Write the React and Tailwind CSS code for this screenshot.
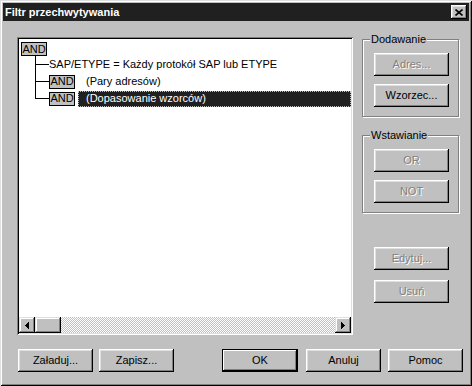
import React from 'react';
import clsx from 'clsx';

const Btn = ({ children, disabled, def, className }) => (
  <button
    className={clsx(
      'flex h-[23px] shrink-0 items-center justify-center bg-[#c0c0c0] text-[11px] leading-none',
      def
        ? 'w-[76px] border border-black shadow-[inset_-1px_-1px_#000,inset_1px_1px_#fff,inset_-2px_-2px_#808080]'
        : 'w-[75px] shadow-[inset_-1px_-1px_#000,inset_1px_1px_#fff,inset_-2px_-2px_#808080,inset_2px_2px_#dfdfdf]',
      disabled ? 'text-[#808080] [text-shadow:1px_1px_0_#fff]' : 'text-black',
      className
    )}
  >
    {children}
  </button>
);

// etched group frame, label sits on the top line
const Group = ({ label, children, className }) => (
  <div
    className={clsx(
      'w-[97px] border border-[#808080] pb-[9px] shadow-[inset_1px_1px_#fff,1px_1px_#fff]',
      className
    )}
  >
    <div className="-mt-[7px] ml-[7px] w-fit bg-[#c0c0c0] px-[1px] leading-[13px]">{label}</div>
    <div className="mt-[7px] flex flex-col gap-[8px] pl-[11px]">{children}</div>
  </div>
);

const AndBox = () => (
  <div className="flex h-[14px] w-[26px] items-center justify-center border border-black bg-[#c0c0c0] text-[11px] leading-none">
    AND
  </div>
);

const Row = ({ last, children }) => (
  <div className="flex h-[17px]">
    <div className="flex w-[14px] flex-col">
      <div className="h-[9px] border-b border-l border-black" />
      {!last && <div className="flex-1 border-l border-black" />}
    </div>
    <div className="flex flex-1 items-center">{children}</div>
  </div>
);

const ScrollBtn = ({ dir }) => (
  <div className="flex h-[16px] w-[16px] items-center justify-center bg-[#c0c0c0] shadow-[inset_-1px_-1px_#000,inset_1px_1px_#dfdfdf,inset_-2px_-2px_#808080,inset_2px_2px_#fff]">
    <svg width="4" height="7" viewBox="0 0 4 7" shapeRendering="crispEdges">
      {dir === 'left' ? (
        <path d="M4 0V7L0 3.5Z" fill="#000" />
      ) : (
        <path d="M0 0V7L4 3.5Z" fill="#000" />
      )}
    </svg>
  </div>
);

export default function App() {
  return (
    <div className="h-[386px] w-[472px] bg-[#c0c0c0] p-[3px] font-['Liberation_Sans',Arial,sans-serif] text-[11px] text-black shadow-[inset_1px_1px_#dfdfdf,inset_-1px_-1px_#000,inset_2px_2px_#fff,inset_-2px_-2px_#808080]">
      <div className="flex h-[18px] items-center justify-between bg-[#202020] px-[2px]">
        <span className="text-[11px] font-bold text-white">Filtr przechwytywania</span>
        <button className="flex h-[14px] w-[16px] items-center justify-center bg-[#c0c0c0] shadow-[inset_-1px_-1px_#000,inset_1px_1px_#fff,inset_-2px_-2px_#808080,inset_2px_2px_#dfdfdf]">
          <svg width="8" height="7" viewBox="0 0 8 7">
            <path d="M0.5 0.5L7.5 6.5M7.5 0.5L0.5 6.5" stroke="#000" strokeWidth="1.6" />
          </svg>
        </button>
      </div>

      <div className="flex pt-[16px] pl-[14px]">
        <div className="flex h-[298px] w-[336px] flex-col bg-white p-[2px] shadow-[inset_1px_1px_#808080,inset_-1px_-1px_#fff,inset_2px_2px_#000,inset_-2px_-2px_#dfdfdf]">
          <div className="flex-1 overflow-hidden pt-[3px] pl-[2px]">
            <div className="flex">
              <AndBox />
            </div>
            <div className="ml-[14px]">
              <Row>
                <span className="whitespace-nowrap">SAP/ETYPE = Każdy protokół SAP lub ETYPE</span>
              </Row>
              <Row>
                <AndBox />
                <span className="ml-[3px] pl-[8px] whitespace-nowrap">(Pary adresów)</span>
              </Row>
              <Row last>
                <AndBox />
                <span className="ml-[3px] flex h-[16px] flex-1 items-center border border-dotted border-[#c0c0c0] bg-[#202020] pl-[7px] whitespace-nowrap text-white">
                  (Dopasowanie wzorców)
                </span>
              </Row>
            </div>
          </div>
          <div className="flex h-[16px]">
            <ScrollBtn dir="left" />
            <div className="flex flex-1 bg-[repeating-conic-gradient(#c0c0c0_0_25%,#fff_0_50%)] bg-[length:2px_2px]">
              <div className="h-[16px] w-[26px] bg-[#c0c0c0] shadow-[inset_-1px_-1px_#000,inset_1px_1px_#dfdfdf,inset_-2px_-2px_#808080,inset_2px_2px_#fff]" />
            </div>
            <ScrollBtn dir="right" />
          </div>
        </div>

        <div className="mt-[2px] ml-[9px] flex w-[98px] flex-col">
          <Group label="Dodawanie">
            <Btn disabled>Adres...</Btn>
            <Btn>Wzorzec...</Btn>
          </Group>
          <Group label="Wstawianie" className="mt-[18px]">
            <Btn disabled>OR</Btn>
            <Btn disabled>NOT</Btn>
          </Group>
          <Btn disabled className="mt-[34px] ml-[12px]">Edytuj...</Btn>
          <Btn disabled className="mt-[10px] ml-[12px]">Usuń</Btn>
        </div>
      </div>

      <div className="mt-[14px] flex pl-[15px]">
        <Btn>Załaduj...</Btn>
        <Btn className="ml-[6px]">Zapisz...</Btn>
        <Btn def className="ml-[48px]">OK</Btn>
        <Btn className="ml-[8px]">Anuluj</Btn>
        <Btn className="ml-[7px]">Pomoc</Btn>
      </div>
    </div>
  );
}
